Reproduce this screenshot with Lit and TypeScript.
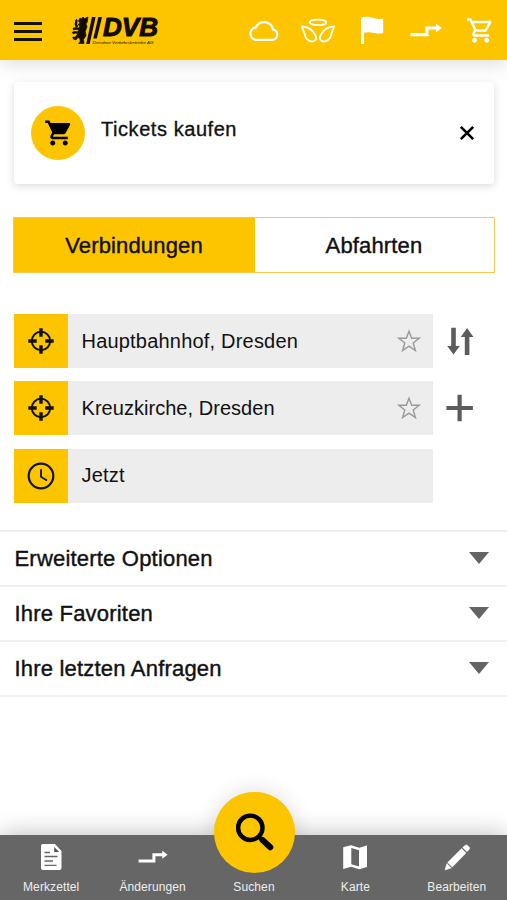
import { LitElement, html, svg, css } from "lit";
import { customElement } from "lit/decorators.js";

const stepArrow = svg`<path d="M.5 18.700H17V12H27" fill="none" stroke="#fff" stroke-width="3.200"/><path d="M26 7.600l5.700 4.400-5.700 4.400z" fill="#fff"/>`;
const cartPath =
  "M7 18c-1.1 0-1.99.9-1.99 2S5.9 22 7 22s2-.9 2-2-.9-2-2-2zM1 2v2h2l3.600 7.590-1.350 2.450c-.16.28-.25.61-.25.96 0 1.100.9 2 2 2h12v-2H7.420c-.14 0-.25-.11-.25-.25l.03-.12.9-1.630h7.450c.75 0 1.410-.41 1.750-1.030l3.580-6.490A1 1 0 0 0 20 4H5.210l-.94-2H1zm16 16c-1.100 0-1.990.9-1.990 2s.89 2 1.990 2 2-.9 2-2-.9-2-2-2z";
const cartOutline =
  "M15.550 13c.75 0 1.410-.41 1.750-1.030l3.580-6.490A.996.996 0 0 0 20.010 4H5.210l-.94-2H1v2h2l3.600 7.590-1.350 2.440C4.520 15.370 5.480 17 7 17h12v-2H7l1.100-2h7.450zM6.160 6h12.150l-2.760 5H8.530L6.160 6zM7 18c-1.100 0-1.990.9-1.990 2S5.900 22 7 22s2-.9 2-2-.9-2-2-2zm10 0c-1.100 0-1.990.9-1.990 2s.89 2 1.990 2 2-.9 2-2-.9-2-2-2z";

const headerIcons = [
  svg`<path d="M8.500 25.700h16.700a5.300 5.300 0 0 0 .8-10.500 9.100 9.100 0 0 0-17.200-1.900A6.300 6.300 0 0 0 8.500 25.700z" fill="none" stroke="#fff" stroke-width="2.300" transform="translate(0 .2)"/>`,
  svg`<g fill="none" stroke="#fff" stroke-width="1.800"><ellipse cx="17" cy="8.400" rx="8.300" ry="2.800"/><path d="M1.200 12.500C7 12.700 11.500 16 14 20.500c1.500 2.800 1.400 5.300-.6 6.400-2.200 1-5.400.3-7.400-1.700-1.700-1.700-2-3.600-2.500-5.800C2.900 17 1.300 15.600 1.200 12.500z"/><path d="M32.800 12.500C27 12.700 22.500 16 20 20.500c-1.500 2.800-1.400 5.300.6 6.400 2.200 1 5.400.3 7.400-1.700 1.700-1.700 2-3.600 2.500-5.800.6-2.400 2.200-3.800 2.300-6.900z"/></g>`,
  svg`<path d="M6 3.600c5-1.700 8.500-.8 12.500.4 3.500 1 6.500 1.200 9.700.6V19c-4 1-7.700.6-11-.2-3-.7-5.200-.6-8.200.1v11H6z" fill="#fff"/>`,
  svg`<g transform="translate(1 2)">${stepArrow}</g>`,
  svg`<path d="${cartOutline}" fill="#fff" transform="translate(3 1.900) scale(1.220)"/>`,
];

const target = svg`<circle cx="14" cy="14" r="9.200" fill="none" stroke="#111" stroke-width="1.900"/><path d="M14 1.300v8.400M14 18.300v8.400M1.300 14h8.400M18.300 14h8.400" stroke="#111" stroke-width="3.400"/>`;
const clock = svg`<circle cx="14" cy="14" r="12.300" fill="none" stroke="#111" stroke-width="2.200"/><path d="M14 7.300V14.700L20 18.400" fill="none" stroke="#111" stroke-width="1.800"/>`;
const star = svg`<path d="M12 2.300l2.700 7h7.500l-6 4.700 2.200 7.500L12 17.200l-6.400 4.300L7.800 14l-6-4.700h7.500z" fill="none" stroke="#999" stroke-width="1.400"/>`;
const swap = svg`<g fill="#5c5c5c"><path d="M5.200 .8h4.600v18.200h4L7.500 27.600 1.200 19h4z"/><path d="M18.800 28h4.600V10h4L21.100 1l-6.300 9h4z"/></g>`;
const plus = svg`<path d="M13.600 .8v26.500M.4 14h26.500" stroke="#5c5c5c" stroke-width="4.200" fill="none"/>`;

const rows = [
  { icon: target, text: "Hauptbahnhof, Dresden", cls: "haupt", fav: true, action: swap },
  { icon: target, text: "Kreuzkirche, Dresden", cls: "kreuz", fav: true, action: plus },
  { icon: clock, text: "Jetzt", cls: "jetzt", fav: false, action: null },
];

const sections = ["Erweiterte Optionen", "Ihre Favoriten", "Ihre letzten Anfragen"];

const nav = [
  { label: "Merkzettel", icon: svg`<path d="M8 3H20l6.500 7v17a2 2 0 0 1-2 2H8a2 2 0 0 1-2-2V5a2 2 0 0 1 2-2z" fill="#fff"/><path d="M19.200 6v5h5z" fill="#555"/><path d="M9.500 11.500h5.500M9.500 15.500h13M9.500 20h8.500M9.500 24.400h12" stroke="#666" stroke-width="1.300"/>` },
  { label: "Änderungen", icon: svg`<g transform="translate(1.100 2.600) scale(.93)">${stepArrow}</g>` },
  { label: "Suchen", icon: null },
  { label: "Karte", icon: svg`<path d="M4.200 6.300L12 4.300l8.300 2.500L28 4.400V26l-7.700 2.200-8.300-2.400-7.800 2.200z" fill="#fff"/><path d="M12.300 6.900l7.700 2.400v16.300l-7.700-2.400z" fill="#666"/>` },
  { label: "Bearbeiten", icon: svg`<path d="M21.700 6.500L24 4.500c1-.9 2-.7 2.900.2l1 1.100c.9 1 1 1.900.1 2.800l-2 2.100zM20.600 7.600l4.400 4.400L11.300 26l-4.700-4.500zM5.800 22.600l4.500 4.300L4 29z" fill="#fff" stroke="#fff" stroke-width=".5"/>` },
];

@customElement("app-root")
export class AppRoot extends LitElement {
  static styles = css`
    :host { display: block; height: 900px; font-family: "Liberation Sans", Arial, sans-serif; color: #111; background: #fff; overflow: hidden; }
    * { box-sizing: border-box; }
    svg { display: block; overflow: visible; flex: none; }
    .screen { height: 900px; display: flex; flex-direction: column; }
    header { height: 60px; flex: none; background: #fdc500; display: flex; align-items: center; padding-left: 14px; box-shadow: 0 2px 20px rgba(0,0,0,.17); }
    .menu { width: 28px; height: 19px; margin-top: 2px; display: flex; flex-direction: column; justify-content: space-between; }
    .menu i { height: 3px; background: #17130a; }
    .logo { margin-left: 30px; }
    .dvb { font: italic bold 25.500px "Liberation Sans", Arial, sans-serif; }
    .claim { font: italic 4.200px "Liberation Sans", Arial, sans-serif; }
    .tools { display: flex; margin-left: auto; }
    .tools span { width: 54px; display: flex; justify-content: center; }
    .card { margin: 22px 13px 0 14px; height: 102px; flex: none; border-radius: 4px; background: #fff; box-shadow: 0 2px 9px rgba(0,0,0,.15); display: flex; padding: 24px 20.500px 0 16.500px; }
    .badge { width: 54px; height: 54px; border-radius: 50%; background: #fdc500; display: grid; place-items: center; padding-left: 2px; }
    .title { margin: 12px 0 0 16.500px; font-size: 20px; line-height: 23px; letter-spacing: .56px; -webkit-text-stroke: .35px #111; }
    .close { margin: 20px 0 0 auto; }
    .tabs { margin: 33px 12px 0 13px; height: 56px; flex: none; border: 1px solid #f8c94d; display: flex; }
    .tab { flex: 1; display: grid; place-items: center; font-size: 22px; letter-spacing: .15px; padding: 1px 1px 0 0; -webkit-text-stroke: .4px #111; }
    .tab.on { background: #fdc500; flex: 0 0 241px; }
    .form { margin: 41px 0 0 14px; display: flex; flex-direction: column; gap: 13.300px; flex: none; }
    .row { display: flex; height: 54px; align-items: center; }
    .lead { width: 54px; height: 54px; background: #fdc500; display: grid; place-items: center; }
    .field { width: 365px; height: 54px; background: #ededed; display: flex; align-items: center; justify-content: space-between; padding: 0 12.500px 0 13.500px; font-size: 20px; letter-spacing: .2px; }
    .kreuz { letter-spacing: .04px; }
    .act { margin-left: 13px; }
    .list { margin-top: 27px; border-top: 2px solid #f0f0f0; flex: none; }
    .item { height: 55px; border-bottom: 2px solid #f0f0f0; display: flex; align-items: center; justify-content: space-between; padding: 0 18px 0 14.500px; font-size: 22px; letter-spacing: .2px; -webkit-text-stroke: .4px #111; }
    .item span { padding-top: 1px; }
    .item svg { margin-bottom: 1px; }
    nav { margin-top: auto; height: 65px; flex: none; background: #666; display: flex; box-shadow: 0 -3px 22px rgba(0,0,0,.22); }
    .entry { flex: 1; display: flex; flex-direction: column; align-items: center; justify-content: space-between; padding: 6px 0 5px 1px; color: #eee; font-size: 12px; line-height: 16px; letter-spacing: .1px; position: relative; }
    .ico { width: 32px; height: 32px; }
    .find { position: absolute; top: -43px; width: 81px; height: 81px; border-radius: 50%; background: #fdc500; box-shadow: 0 0 22px rgba(0,0,0,.14); clip-path: inset(-40px -40px 38px -40px); }
    .disc { position: absolute; top: -43px; width: 81px; height: 81px; border-radius: 50%; background: #fdc500; }
  `;

  render() {
    return html`<div class="screen">
      <header>
        <div class="menu"><i></i><i></i><i></i></div>
        <svg class="logo" width="86" height="30" viewBox="0 0 86 30" fill="#100d00">
          <path stroke="#100d00" stroke-width=".7" d="M8 3l1.500 1L11 2l1.500 1.500L16 2l-.8 5-1.200 2 1 2.500-1.700 5 .7 4-2.500 4 .5 4H6.500l1.700-2-.4-3-1.800-1-2.200 2.500L1.300 24l-.5-2 2.400.3 2.600-3.800L3.500 18l-2 1-1.300-1.600 2.300-.9 3 .2 1.500-2-3-.4L1.500 15l-.3-2 2.300-.3 3.200.3L8 11 6 9.500 8 8 6.500 6z"/>
          <path d="M5.500 12C1.500 9 6 7.500 4 4.500" fill="none" stroke="#100d00" stroke-width="2.300"/>
          <path d="M20 2h3.600L17.600 29h-3.400zM26.400 2H30l-5.200 21.500h-3.500z"/>
          <text class="dvb" x="31" y="20.900" textLength="55" lengthAdjust="spacingAndGlyphs" stroke="#100d00" stroke-width="1">DVB</text>
          <text class="claim" x="20.500" y="28.800" textLength="61" lengthAdjust="spacingAndGlyphs">Dresdner Verkehrsbetriebe AG</text>
        </svg>
        <div class="tools">${headerIcons.map((i) => html`<span><svg width="34" height="32" viewBox="0 0 34 32">${i}</svg></span>`)}</div>
      </header>
      <section class="card">
        <div class="badge"><svg width="30" height="30" viewBox="0 0 24 24"><path d="${cartPath}" fill="#000"/></svg></div>
        <div class="title">Tickets kaufen</div>
        <svg class="close" width="14" height="14" viewBox="0 0 14 14"><path d="M.8.8l12.400 12.400M13.200.8L.8 13.200" stroke="#000" stroke-width="2.600"/></svg>
      </section>
      <div class="tabs"><div class="tab on">Verbindungen</div><div class="tab">Abfahrten</div></div>
      <div class="form">
        ${rows.map((r) => html`<div class="row">
          <div class="lead"><svg width="28" height="28" viewBox="0 0 28 28">${r.icon}</svg></div>
          <div class="field"><span class="${r.cls}">${r.text}</span>${r.fav ? html`<svg width="24" height="24" viewBox="0 0 24 24">${star}</svg>` : ""}</div>
          ${r.action ? html`<svg class="act" width="28" height="28" viewBox="0 0 28 28">${r.action}</svg>` : ""}
        </div>`)}
      </div>
      <div class="list">
        ${sections.map((s) => html`<div class="item"><span>${s}</span><svg width="20" height="12" viewBox="0 0 20 12"><path d="M0 0h20L10 12z" fill="#646464"/></svg></div>`)}
      </div>
      <nav>
        ${nav.map((n) => html`<div class="entry">
          ${n.icon
            ? html`<svg class="ico" viewBox="0 0 32 32">${n.icon}</svg>`
            : html`<span class="ico"></span><span class="find"></span><svg class="disc" viewBox="0 0 81 81"><circle cx="36.300" cy="35.800" r="12.200" fill="none" stroke="#000" stroke-width="4.400"/><path d="M44.500 44.500l4 4" stroke="#000" stroke-width="3.500"/><path d="M48.500 48l7.800 7.200" stroke="#000" stroke-width="6" stroke-linecap="round"/></svg>`}
          <span>${n.label}</span>
        </div>`)}
      </nav>
    </div>`;
  }
}
